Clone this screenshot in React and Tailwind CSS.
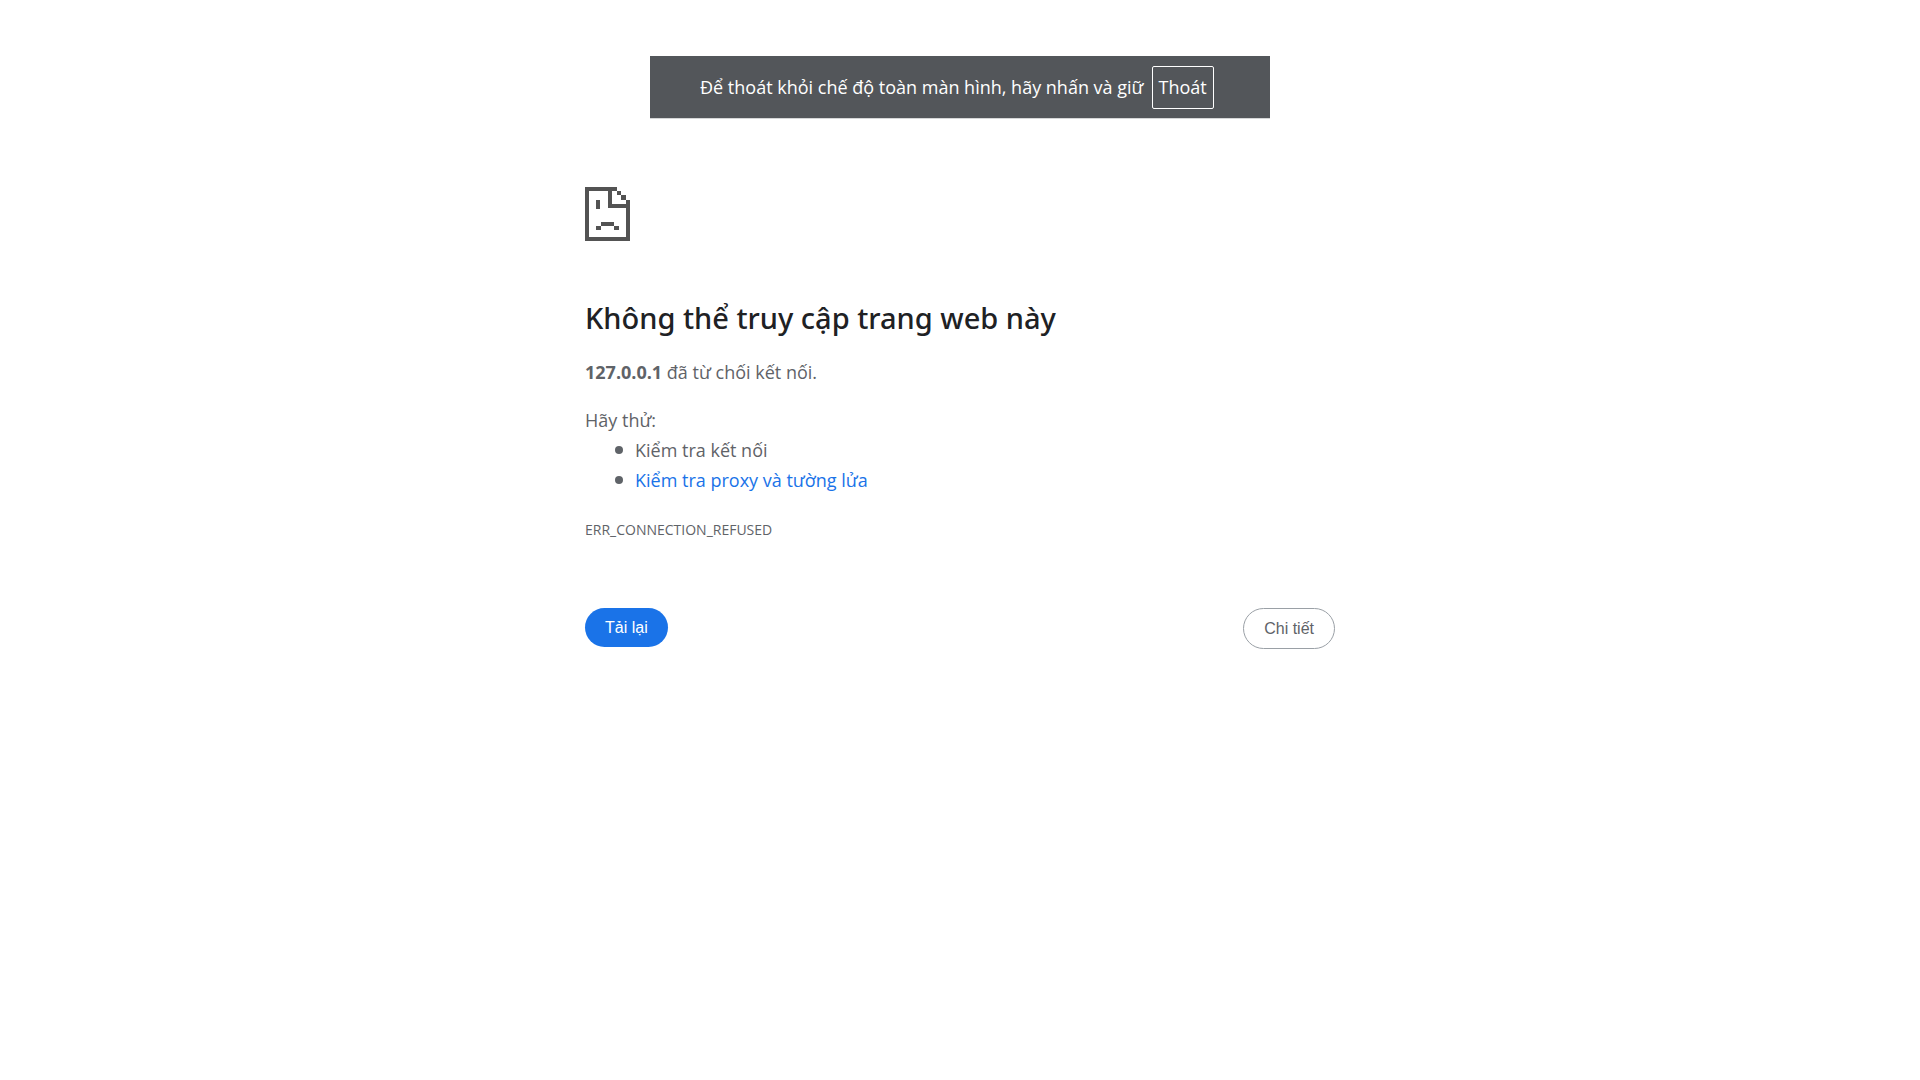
const darkCells = [
  [0, 0, 32, 4], [0, 0, 4, 54], [0, 50, 45, 4], [41, 13, 4, 41],
  [23, 0, 4, 21], [23, 17, 22, 4], [32, 4, 4, 4], [36, 8, 5, 5],
  [11, 13, 4, 9], [16, 35, 13, 4], [11, 39, 5, 4], [29, 39, 5, 4],
];

function SadPageIcon() {
  return (
    <svg className="block h-[54px] w-[45px]" viewBox="0 0 45 54" shapeRendering="crispEdges" aria-hidden="true">
      {darkCells.map(([x, y, w, h], i) => (
        <rect key={i} x={x} y={y} width={w} height={h} fill="#535353" />
      ))}
    </svg>
  );
}

function FullscreenNotice() {
  return (
    <div className="absolute top-14 left-1/2 flex h-[63px] w-[620px] max-w-full -translate-x-1/2 items-center gap-2 border-b border-[#d5d6d7] bg-[#53565a] pl-[50px] text-lg whitespace-nowrap text-white">
      <span>Để thoát khỏi chế độ toàn màn hình, hãy nhấn và giữ</span>
      <kbd className="flex h-[43px] items-center rounded-xs border border-white px-1.5 font-['Open_Sans','Noto_Sans',sans-serif]">Thoát</kbd>
    </div>
  );
}

function Suggestion({ children }) {
  return (
    <li className="flex items-center gap-3">
      <span className="size-2 rounded-full bg-[#5f6368]" aria-hidden="true" />
      {children}
    </li>
  );
}

export default function App() {
  return (
    <div className="min-h-screen bg-white font-['Open_Sans','Noto_Sans',sans-serif] text-[#5f6368]">
      <FullscreenNotice />
      <main className="mx-auto w-full max-w-[750px] pt-[187px] text-lg leading-[30px]">
        <SadPageIcon />
        <h1 className="mt-[59px] font-['Noto_Sans',sans-serif] text-[29px] leading-9 font-medium text-[#202124]">Không thể truy cập trang web này</h1>
        <p className="mt-[21px]">
          <strong className="font-bold">127.0.0.1</strong> đã từ chối kết nối.
        </p>
        <div className="mt-[18px]">
          <p>Hãy thử:</p>
          <ul className="list-none pl-[30px]">
            <Suggestion>Kiểm tra kết nối</Suggestion>
            <Suggestion><a href="#proxy" className="text-[#1a73e8]">Kiểm tra proxy và tường lửa</a></Suggestion>
          </ul>
        </div>
        <p className="mt-5 text-sm leading-[30px]">ERR_CONNECTION_REFUSED</p>
        <div className="mt-[63px] flex items-start justify-between font-['Liberation_Sans',sans-serif] text-base leading-[23px]">
          <button type="button" className="rounded-full bg-[#1a73e8] px-5 py-2 text-white">Tải lại</button>
          <button type="button" className="rounded-full border border-[#9aa0a6] bg-white px-5 py-2 text-[#5f6368]">Chi tiết</button>
        </div>
      </main>
    </div>
  );
}
